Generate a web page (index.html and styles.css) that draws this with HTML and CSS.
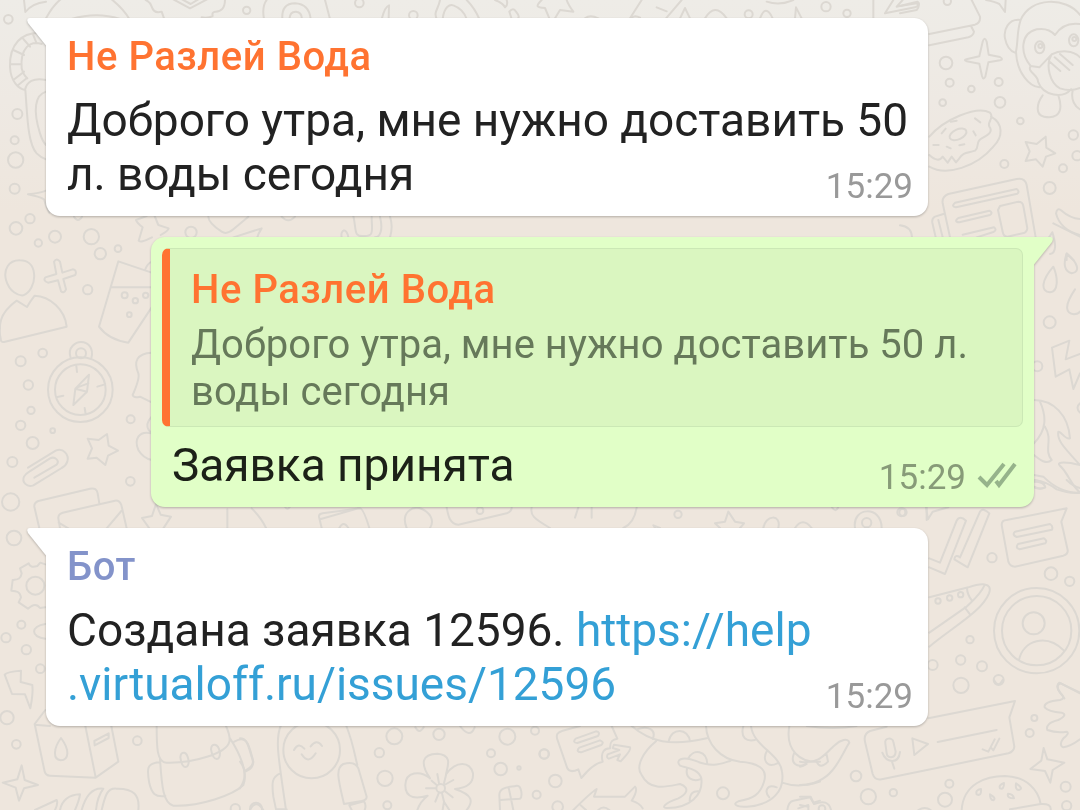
FILE: index.html
```html
<!DOCTYPE html>
<html lang="ru">
<head>
  <meta charset="UTF-8">
  <title>Чат</title>
  <link rel="stylesheet" href="styles.css">
</head>
<body>
  <!-- doodle wallpaper -->
  <svg class="wallpaper" viewBox="0 0 3240 2430" aria-hidden="true">
    <!-- top left -->
    <g>
      <path d="M72 0L76 36Q95 10 138 5M138 55C165 5 190-10 205-15M325-10Q370 25 388 57M215 57Q290 35 360 57"/>
      <path d="M437 0Q450 5 455 20Q462 42 485 35L492 55M520-2L570 25L625-4M535-8L572 12L605-8M675 0Q674 36 645 35Q635 37 638 48Q625 55 605 52"/>
      <path d="M792 57Q785 20 800 0M847 57Q844 10 885 10Q927 12 932 57M868 57Q870 34 888 35Q907 38 905 57M975 0L990 57M1146 54Q1155 20 1167 16L1166 55"/>
      <path d="M1310 57C1300 35 1315 28 1320 0M1328 57C1332 20 1350 12 1360 16C1382 24 1395 42 1400 57M1400 0C1420 20 1430 38 1438 57M1485 0Q1510 10 1515 22Q1525 15 1520 0M1528 35Q1540 20 1548 35Q1562 52 1552 57M1528 35L1535 57M1625 0C1605 20 1610 22 1635 24L1648 55M1665 55L1680 30L1720 35Q1705 15 1700 0M1755 55Q1770 43 1795 55M1890 55L1925 0M1895 53Q1905 44 1920 53M2000 34L1970 22M2045 0L1998 55M2040 55L2055 24L2070 55M2115 55Q2145 5 2180 55M2280 55Q2297 10 2318 55M2385 55L2388 22L2405 55M2300 5Q2340 18 2380 0M2620 0V55M2680 0L2655 40L2745 22Q2765 15 2752 5L2690 20L2708 0"/>
      <circle cx="25" cy="58" r="13"/><circle cx="740" cy="31" r="11"/><circle cx="1078" cy="9" r="13"/><circle cx="1240" cy="46" r="13"/><circle cx="2246" cy="43" r="12"/><circle cx="2478" cy="20" r="14"/><circle cx="2541" cy="40" r="11"/>
      <path d="M138 101C60 88 28 140 30 200C32 245 55 265 75 270C80 245 100 232 138 240M125 132C90 120 60 145 65 205Q70 225 82 235M40 150L72 165M30 193H65M40 240L72 215M70 117L90 140M98 101L110 130M52 257L80 235M76 270C82 340 82 430 110 460Q122 472 138 478M138 275C105 285 98 330 120 400Q128 425 138 435"/>
      <circle cx="52" cy="342" r="15"/><circle cx="44" cy="421" r="12"/><circle cx="47" cy="480" r="23"/><circle cx="44" cy="566" r="15"/>
      <path d="M138 572Q118 580 84 583Q118 590 132 598Q140 625 148 638"/>
      <circle cx="90" cy="656" r="14"/><circle cx="48" cy="685" r="19"/><circle cx="165" cy="710" r="18"/><circle cx="274" cy="710" r="23"/><circle cx="573" cy="697" r="17"/><path d="M222 650Q234 670 246 650"/>
      <path d="M625 650Q625 668 665 695Q680 705 700 688L745 650M700 712L785 685Q775 700 772 712M845 650Q865 672 885 650M1025 712C1020 690 1040 680 1045 712M1060 648C1070 690 1060 710 1090 708C1125 710 1115 690 1115 650M1140 650C1150 690 1140 712 1125 712M1170 650Q1180 680 1170 712"/>
    </g>
    <!-- left column -->
    <g transform="translate(0 600)">
      <path d="M440 48L408 60Q410 68 428 82L416 122Q420 130 456 112M464 48L475 75L506 85Q505 92 482 105"/>
      <circle cx="115" cy="129" r="11"/><circle cx="301" cy="161" r="17"/><circle cx="354" cy="146" r="10"/><circle cx="263" cy="269" r="14"/>
      <path d="M60 181C25 180 10 210 18 240C28 275 55 288 70 286C88 280 106 252 102 220C99 192 80 181 60 181ZM0 385C-2 345 25 320 50 302L81 321Q90 305 104 287C150 288 195 330 200 380L12 426Q2 428 2 415Q-2 400 0 385Z"/>
      <path d="M162 185Q170 172 180 185L187 218L218 208Q232 210 226 225L190 237L198 268Q192 282 183 274L174 241L144 248Q128 242 136 232L169 222Z"/>
      <path d="M455 218L355 184L297 380C315 405 345 422 385 428L455 322M334 262H455M435 210Q442 190 456 185"/>
      <circle cx="374" cy="286" r="9"/><circle cx="406" cy="302" r="8"/><circle cx="437" cy="286" r="8"/><circle cx="388" cy="344" r="7"/>
      <circle cx="241" cy="569" r="97"/><circle cx="241" cy="569" r="76"/><circle cx="243" cy="460" r="15"/>
      <path d="M212 474C200 440 230 426 243 426C265 426 282 445 274 474M229 498L231 516M312 554L292 560M190 587L172 591M254 624L257 642M267 524L226 566L220 615L261 575ZM226 566L261 575M232 562L265 550"/>
      <circle cx="62" cy="484" r="15"/><circle cx="128" cy="459" r="13"/><circle cx="85" cy="555" r="14"/><circle cx="93" cy="631" r="11"/><circle cx="62" cy="676" r="14"/><circle cx="158" cy="692" r="7"/><circle cx="98" cy="729" r="18"/><circle cx="37" cy="786" r="15"/><circle cx="392" cy="658" r="12"/><circle cx="391" cy="844" r="13"/><circle cx="32" cy="906" r="26"/>
      <path d="M321 702L326 737L354 752L324 767L316 795L290 773L263 776L276 745L263 716L296 720Z"/>
      <path d="M84 803L167 752C190 742 208 765 202 785Q198 797 185 804L100 856C80 864 65 845 72 830Q76 822 88 815L150 775C165 768 180 782 170 794L103 833"/>
      <path d="M455 458C410 460 400 485 415 520Q420 535 398 585Q400 595 420 590L455 607M455 650Q435 672 446 690L455 700C415 690 402 720 415 750Q430 775 455 780"/>
      <path d="M118 985L103 920Q102 908 115 903L270 866Q290 862 293 880L298 910M180 985L175 955Q174 942 188 938L345 902Q358 900 364 915L380 985M176 968L205 985M364 933L320 985M468 912L456 948L426 954L448 985M468 912L482 944L513 950L490 985"/>
    </g>
    <!-- between the second and the third message -->
    <g transform="translate(0 1500)">
      <path d="M682 28V84M755 25Q785 55 798 84M965 84L957 50Q956 42 968 40L1080 25Q1090 25 1108 84M960 58L1075 25M1018 84Q1030 60 1045 84M1220 84C1200 35 1240 20 1258 24C1290 35 1305 60 1290 84M1340 22C1345 50 1350 72 1375 74L1520 40Q1535 35 1535 22M1595 22C1590 45 1600 55 1650 84M1910 22C1905 55 1890 75 1870 84M1725 53L1735 22M1775 22V53M1965 84L1960 76L1980 84M2185 35L2175 65L2145 70L2160 84M2185 35L2205 65L2232 70L2220 84M2290 84C2295 45 2345 40 2335 84M2385 84Q2408 50 2435 84M2565 84C2555 20 2645 15 2645 84M2780 22V60"/>
      <circle cx="1440" cy="32" r="10"/><circle cx="2034" cy="43" r="11"/><circle cx="2600" cy="68" r="14"/><circle cx="2704" cy="37" r="12"/><path d="M855 20Q862 32 870 20M2495 20Q2508 42 2515 20"/>
    </g>
    <!-- bottom left -->
    <g transform="translate(0 1560)">
      <circle cx="42" cy="54" r="22"/><circle cx="106" cy="197" r="27"/><circle cx="64" cy="314" r="12"/><circle cx="18" cy="353" r="14"/><circle cx="79" cy="389" r="14"/><circle cx="121" cy="446" r="13"/><circle cx="21" cy="593" r="20"/><circle cx="49" cy="673" r="13"/><circle cx="412" cy="662" r="13"/>
      <path d="M136 133L121 128L112 138Q90 145 86 130L60 145L65 160C62 180 50 178 38 180L34 212C50 213 60 215 63 232L56 247L84 266L95 258Q110 250 120 264L136 262M136 312C90 318 92 352 136 356"/>
      <path d="M14 464Q20 455 63 452L62 486L97 495Q100 520 91 565L75 523L36 522Z"/>
      <path d="M136 570L104 612L134 755Q138 767 150 767L287 773L355 725L334 618M104 614L150 618M256 618L287 772M183 654C160 685 158 718 182 721C207 720 210 690 183 654ZM283 663L326 640V654L284 676Z"/>
      <path d="M65 736L74 780L114 795L72 805L57 842L47 803L8 788L52 778Z"/>
      <path d="M470 618C470 680 470 728 500 728C580 730 680 700 688 665Q692 650 678 618M480 715C485 800 490 850 520 857C600 860 700 825 730 795C745 760 720 700 690 655M478 727C440 730 440 745 448 790C455 820 465 832 496 828M703 665C735 645 745 665 756 710C765 735 750 745 736 752"/>
      <path d="M541 712Q542 697 553 698Q562 700 566 722Q567 740 556 741Q545 740 541 712ZM633 688Q634 673 645 674Q656 676 660 698Q660 716 650 717Q638 716 633 688Z"/>
      <path d="M105 870L170 840Q175 850 165 870M180 870Q190 825 240 823Q238 840 225 870M245 870Q265 800 310 806Q292 830 288 870M305 870C315 830 320 803 350 806C400 805 420 825 415 870"/>
      <circle cx="706" cy="866" r="14"/><circle cx="768" cy="866" r="18"/>
    </g>
    <!-- bottom middle -->
    <g transform="translate(720 2100)">
      <path d="M122 78C105 120 115 170 138 330M319 78C340 130 345 170 352 195M162 150Q175 125 193 146M212 139Q230 115 246 138M185 163Q205 195 227 160M312 312C295 240 285 205 310 192Q345 182 355 205L380 290Q380 300 365 303ZM121 220C95 230 95 250 100 290L108 328H140M328 316L335 330M328 316L372 304Q380 315 374 330"/>
      <circle cx="215" cy="150" r="85"/><circle cx="463" cy="109" r="24"/><circle cx="418" cy="158" r="14"/><circle cx="435" cy="235" r="23"/><circle cx="442" cy="316" r="12"/><circle cx="597" cy="103" r="17"/><circle cx="802" cy="110" r="24"/><circle cx="753" cy="160" r="12"/><circle cx="885" cy="92" r="12"/><circle cx="912" cy="162" r="14"/><circle cx="782" cy="207" r="19"/><circle cx="837" cy="204" r="5"/><circle cx="890" cy="284" r="12"/>
      <path d="M526 82Q538 104 551 82M660 78Q690 118 704 82M30 330Q48 295 70 330"/>
      <path d="M570 235C540 190 545 162 592 161C640 165 622 200 618 223C650 180 690 185 699 220C702 260 665 265 645 267C700 285 700 305 680 330M570 235C540 210 497 215 496 255C495 300 535 295 563 287Q540 305 532 330M612 305L608 330M612 305L628 330"/>
      <circle cx="602" cy="265" r="13"/><path d="M597 250L592 222M613 255L640 240M615 274L638 292M606 280L612 305M596 280L586 305M587 265H558M590 255L575 242M612 250L618 225"/>
      <path d="M780 330L778 285C778 260 810 262 830 257C845 255 848 290 840 296L782 300M806 263L820 330"/>
      <path d="M0 115C25 115 25 145 40 185Q40 205 18 214M0 185Q28 220 0 265"/>
    </g>
    <g transform="translate(1620 2100)">
      <path d="M215 78L232 116C205 120 212 140 210 145C195 145 180 155 188 185Q160 190 124 234L115 208Q90 220 82 205L52 118Q45 98 68 92L120 78M107 116L168 94Q182 96 174 108L112 129Q96 128 107 116ZM118 143L180 121Q194 126 184 135L123 157Q106 155 118 143Z"/>
      <path d="M203 163L238 150L218 144L222 134L270 142Q275 150 242 184L232 180L240 163L207 176Q198 174 203 163Z"/>
      <circle cx="13" cy="162" r="14"/><circle cx="46" cy="243" r="19"/><circle cx="53" cy="320" r="16"/><circle cx="549" cy="280" r="18"/>
      <path d="M275 78C330 125 390 140 500 115M290 88C325 75 350 90 338 117M386 124C395 80 445 85 450 124M348 124C310 155 285 200 305 225C330 275 380 260 420 252C455 265 435 285 415 295C370 310 365 325 380 324C450 325 490 285 484 235C475 205 440 205 420 197C405 180 425 168 465 182C520 205 545 190 572 182M445 175C460 145 500 150 502 192M441 207C435 235 460 245 480 238M478 274Q450 270 449 302M498 78C500 130 540 178 600 185C650 188 685 205 672 245C660 285 640 295 595 304C575 312 590 322 620 320C700 315 735 270 726 215C720 160 640 140 633 78M610 78C600 115 620 125 645 120M682 150C665 180 680 205 712 190M710 262C680 250 672 275 688 292M748 78C735 150 780 190 840 185M762 160C750 190 770 205 800 192M726 248C765 262 810 255 840 245"/>
      <path d="M100 330Q150 280 170 267L162 290H255L285 260Q295 270 275 302Q300 310 308 325M122 316L138 330M175 330Q190 315 208 330M742 330Q745 305 760 302L810 292L820 308L840 302M775 325L805 315V330"/>
    </g>
    <!-- bottom right -->
    <g transform="translate(2400 2040)">
      <path d="M385 115L645 63L628 112L643 200Q642 215 625 220L245 298Q225 302 218 282L195 185Q190 162 210 153L260 140M413 186L590 150M337 175L384 192L343 225ZM548 208L565 215L584 178M573 203L580 211L598 176M247 218C258 248 295 255 300 216M276 245L283 266"/>
      <path d="M256 190C252 172 278 172 280 185L287 215C285 238 262 235 260 220Z"/>
      <path d="M20 138Q100 150 170 138M0 245C60 255 80 215 105 195C120 180 145 172 148 188C130 215 110 270 70 295Q40 315 0 315M0 260Q18 258 20 243M50 245Q60 270 84 245L80 224"/>
      <circle cx="483" cy="16" r="23"/><circle cx="703" cy="114" r="9"/><circle cx="689" cy="159" r="12"/><circle cx="797" cy="320" r="15"/><circle cx="800" cy="377" r="14"/><circle cx="168" cy="288" r="16"/><circle cx="205" cy="350" r="23"/><circle cx="280" cy="338" r="11"/><circle cx="448" cy="311" r="12"/><circle cx="435" cy="359" r="21"/><circle cx="66" cy="386" r="10"/>
      <path d="M582 0Q595 25 608 0M355 390Q375 378 392 390M0 350H32L42 372Q85 355 93 390M0 375L25 380"/>
      <path d="M840 38L782 10Q765 15 780 38Q800 55 780 60Q730 65 734 82Q745 95 785 98Q805 105 775 120Q735 130 742 150Q770 160 800 155Q810 160 790 175Q775 195 790 202Q810 200 840 178M731 204L742 238L793 248L758 270L751 308L735 273L691 267L724 242Z"/>
      <path d="M485 390C490 310 560 288 615 288C680 290 715 330 722 372L630 388M722 372Q755 370 752 390M543 327Q525 330 530 343Q545 350 543 327ZM612 309Q595 315 600 325Q612 330 612 309ZM648 310Q645 330 657 330Q672 325 648 310ZM570 343Q570 360 580 361Q590 355 570 343ZM624 341Q620 355 642 355Q640 342 624 341Z"/>
    </g>
    <!-- right column, lower part -->
    <g transform="translate(2700 1440)">
      <path d="M88 235L120 248L170 122Q180 105 198 122L135 282L88 262M163 238Q165 222 180 232L240 95Q250 82 268 100L203 262ZM78 82L84 118L98 95L145 82"/>
      <path d="M305 135Q305 120 320 120L500 85L484 125L503 210Q505 222 490 227L345 260Q330 260 325 245ZM345 155L450 132Q460 138 456 149L350 171Q335 165 345 155ZM354 192L432 175Q443 182 436 190L359 208Q345 204 354 192Z"/>
      <path d="M88 352L205 322C240 310 280 305 267 340C245 395 160 440 88 500M88 458L200 380C220 360 240 345 253 317M201 325Q202 345 216 362M194 382L210 403"/>
      <circle cx="114" cy="363" r="8"/><circle cx="149" cy="354" r="8"/><circle cx="182" cy="344" r="8"/>
      <circle cx="410" cy="452" r="128"/><circle cx="410" cy="452" r="104"/><circle cx="401" cy="430" r="33"/><path d="M357 540C370 480 440 460 492 512"/>
      <circle cx="9" cy="97" r="11"/><circle cx="276" cy="233" r="14"/><circle cx="453" cy="281" r="19"/><circle cx="509" cy="304" r="14"/><circle cx="210" cy="479" r="11"/><circle cx="182" cy="540" r="14"/><circle cx="246" cy="559" r="15"/><circle cx="296" cy="600" r="15"/><circle cx="98" cy="555" r="15"/>
      <path d="M402 5Q435 5 436 22Q420 30 402 20M405 0Q440 5 470 28Q510 42 540 38M500 0Q520 20 540 24M540 640L478 608Q468 615 475 630L493 655"/>
    </g>
    <!-- right column, top -->
    <g transform="translate(2700 0)">
      <path d="M0 40L50 30Q62 18 50 10L0 18M215 0L240 50Q242 68 225 74L88 102M213 78L222 95Q220 108 205 112L88 136M258 0Q285 5 298 12L315 36L317 0"/>
      <circle cx="142" cy="4" r="11"/>
      <path d="M540 45C500-10 390-10 362 60C350 95 355 120 348 155C350 220 390 260 418 262M362 60C325 55 310 90 315 115Q322 150 345 158M392 198C360 160 360 100 410 88Q445 82 465 105Q490 65 540 72M392 198C380 215 415 225 414 245C430 290 490 295 513 268M392 198L418 202L455 163C480 150 520 150 540 172M455 163C435 195 450 250 480 265C500 272 525 270 540 264M450 186L481 213M464 172L508 210M480 162L518 195M428 286C410 310 405 345 432 350C490 360 485 315 475 286M518 272C512 300 525 320 540 328"/>
      <ellipse cx="419" cy="142" rx="14" ry="18"/><ellipse cx="521" cy="121" rx="14" ry="18"/><circle cx="421" cy="138" r="6"/><circle cx="523" cy="117" r="6"/>
      <path d="M248 125Q254 108 260 125L266 164L300 171Q312 178 300 181L265 187L256 230Q250 242 246 228L238 191L200 184Q188 180 202 177L238 169Z"/>
      <circle cx="138" cy="189" r="19"/><circle cx="149" cy="248" r="12"/><circle cx="214" cy="267" r="10"/><circle cx="296" cy="246" r="12"/><circle cx="128" cy="308" r="10"/><circle cx="300" cy="307" r="16"/><circle cx="361" cy="363" r="10"/><circle cx="313" cy="492" r="12"/><circle cx="520" cy="405" r="14"/><circle cx="531" cy="467" r="14"/><circle cx="489" cy="505" r="12"/><circle cx="449" cy="564" r="18"/>
      <path d="M88 410C130 360 230 315 270 338C285 355 260 365 268 380C280 395 265 405 245 415C225 425 240 440 225 452C205 460 190 455 178 475L168 487L155 470L143 488L128 470Q115 490 88 465M273 350C310 370 310 410 280 440C230 500 140 530 88 500"/>
      <ellipse cx="174" cy="403" rx="27" ry="15" transform="rotate(-25 174 403)"/><path d="M152 365L170 362M225 355L241 367M137 386L125 400M220 394L227 406M100 435H116M140 440L152 445M178 436L193 433"/>
      <path d="M437 410L439 443L466 460L438 470L428 500L408 478L377 483L389 454L377 426L410 432Z"/>
      <path d="M150 712L128 610Q125 590 145 582L350 537Q375 532 380 555L407 712M165 608L350 567Q360 575 352 581L168 622Q152 620 165 608ZM175 654L268 632Q280 638 270 645L178 667Q160 665 175 654ZM188 704L282 682Q292 690 280 696L230 712M300 618L355 605Q368 605 370 618L382 685Q380 698 368 700L322 710Q310 710 308 695L294 630ZM130 642L105 650Q95 655 97 668L107 712M115 660L128 712M0 676Q35 680 36 712"/>
      <path d="M540 705C500 695 475 670 468 640Q472 620 485 632C505 650 520 655 540 657M457 697C468 730 470 760 450 762M457 697L445 715M500 780V762L520 780"/>
    </g>
    <g transform="translate(2460 660)">
      <path d="M700 140C665 180 660 215 690 217C715 215 715 175 700 140ZM740 100C728 135 735 155 755 160C785 155 770 125 740 100ZM765 208C730 260 738 280 762 283Q775 282 780 275"/>
      <circle cx="689" cy="307" r="18"/><circle cx="652" cy="439" r="15"/>
      <path d="M748 362L696 383L707 470L748 448L760 507L780 460M748 362L737 418L780 402M700 10L780 50M780 550Q765 562 780 578"/>
      <path d="M642 540C700 540 745 585 750 655C735 660 725 635 715 635C710 660 730 680 780 735C740 725 710 725 718 735C750 765 745 785 780 818C735 820 700 800 670 770L642 765M660 545C680 590 680 630 642 670M675 620C700 660 670 690 695 720C680 735 660 720 642 705M642 780Q675 785 675 802Q660 810 642 802"/>
    </g>
  </svg>

  <div class="chat">
    <div class="message incoming">
      <svg class="tail" viewBox="0 0 21 30"><path d="M3 0H21V30L1 5Q-1 0 3 0Z"/></svg>
      <div class="author orange">Не Разлей Вода</div>
      <div class="text">Доброго утра, мне нужно доставить 50<br>л. воды сегодня</div>
      <div class="meta">15:29</div>
    </div>

    <div class="message outgoing">
      <svg class="tail" viewBox="0 0 21 30"><path d="M0 0H18Q22 0 20 5L0 30Z"/></svg>
      <div class="quote">
        <div class="author orange">Не Разлей Вода</div>
        <div class="quote-text">Доброго утра, мне нужно доставить 50 л.<br>воды сегодня</div>
      </div>
      <div class="text">Заявка принята</div>
      <div class="meta">15:29
        <svg class="checks" viewBox="0 0 40 28"><path d="M2 16L10 24L27 3M19 20L22 24L38 3"/></svg>
      </div>
    </div>

    <div class="message incoming">
      <svg class="tail" viewBox="0 0 21 30"><path d="M3 0H21V30L1 5Q-1 0 3 0Z"/></svg>
      <div class="author blue">Бот</div>
      <div class="text">Создана заявка 12596. <a href="#">https://help<br>.virtualoff.ru/issues/12596</a></div>
      <div class="meta">15:29</div>
    </div>
  </div>
</body>
</html>
```
FILE: styles.css
```css
* {
  box-sizing: border-box;
}
body {
  margin: 0;
  height: 810px;
  overflow: hidden;
  font-family: Roboto, sans-serif;
  background: linear-gradient(#eeece7 0, #eee9e3 100px, #eee6dd 210px, #eee6dd 100%);
}
.wallpaper {
  position: absolute;
  top: 0;
  left: 0;
  width: 1080px;
  height: 810px;
  fill: none;
  stroke: #dcd8d2;
  stroke-width: 6;
  stroke-linecap: round;
  stroke-linejoin: round;
}
.chat {
  position: relative;
  display: flex;
  flex-direction: column;
  gap: 21px;
  padding: 18px 46px;
}
.message {
  position: relative;
  width: 882px;
  border-radius: 14px;
  filter: drop-shadow(0 1.5px 1px rgba(0,0,0,0.25));
}
.incoming {
  height: 198px;
  background: #fff;
  padding: 15px 15px 0 21px;
  border-top-left-radius: 0;
}
.outgoing {
  align-self: flex-end;
  width: 883px;
  height: 270px;
  background: #e1ffc7;
  padding: 11px 11px 0;
  border-top-right-radius: 0;
}
.tail {
  position: absolute;
  top: 0;
  width: 21px;
  height: 30px;
}
.incoming .tail {
  left: -19px;
  fill: #fff;
}
.outgoing .tail {
  right: -19px;
  fill: #e1ffc7;
}
.author {
  font-size: 40px;
  line-height: 47px;
  font-weight: 500;
  letter-spacing: 0.55px;
}
.orange {
  color: #ff7331;
}
.blue {
  color: #8393ca;
}
.text {
  margin-top: 13px;
  font-size: 46px;
  line-height: 54px;
  letter-spacing: -0.02px;
  color: #222;
  white-space: nowrap;
}
.text a {
  color: #34a0d6;
  text-decoration: none;
}
.meta {
  display: flex;
  justify-content: flex-end;
  margin-top: -35px;
  font-size: 35px;
  line-height: 41px;
  color: #999;
}
.quote {
  height: 179px;
  padding: 17px 20px 0 21px;
  border: 1px solid #cbe8b5;
  border-left: 8px solid #ff7331;
  border-radius: 7px;
  background: #daf6c0;
}
.quote-text {
  margin-top: 8px;
  font-size: 40px;
  line-height: 47px;
  letter-spacing: 0.04px;
  color: #66795a;
  white-space: nowrap;
}
.outgoing .text {
  margin: 11px 0 0 10px;
  color: #1c2118;
}
.outgoing .meta {
  margin-right: 6px;
  color: #879b78;
}
.checks {
  width: 40px;
  height: 28px;
  margin: 4px 0 0 11px;
  fill: none;
  stroke: #96b38b;
  stroke-width: 4;
}
```
